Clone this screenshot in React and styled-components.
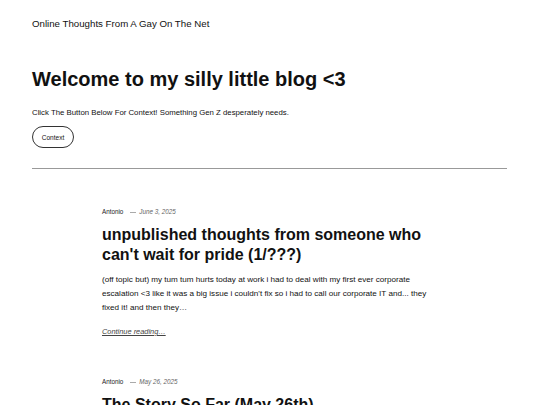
import React from 'react'
import styled, { createGlobalStyle } from 'styled-components'

const GlobalStyle = createGlobalStyle`
  html, body {
    margin: 0;
    padding: 0;
    background: #fff;
    color: #111;
    font-family: "Liberation Sans", Arial, sans-serif;
  }
`

const Page = styled.div`
  width: 540px;
  height: 405px;
  overflow: hidden;
  padding: 0 32px;
  box-sizing: border-box;
`

const Header = styled.header`
  padding-top: 18px;
  height: 50px;
  box-sizing: border-box;
`

const SiteTitle = styled.div`
  font-size: 9.7px;
  line-height: 12px;
  color: #111;
`

const Hero = styled.section`
  padding-top: 17px;
`

const Heading = styled.h1`
  margin: 0;
  font-size: 20px;
  line-height: 24px;
  font-weight: 700;
  color: #111;
`

const Lead = styled.p`
  margin: 17px 0 0;
  font-size: 7.8px;
  line-height: 10px;
  color: #111;
`

const PillButton = styled.button`
  display: block;
  margin-top: 8px;
  width: 42px;
  height: 22px;
  border: 1px solid #333;
  border-radius: 11px;
  background: #fff;
  font-family: inherit;
  font-size: 6.5px;
  color: #111;
  padding: 0;
`

const Rule = styled.hr`
  margin: 20px 0 0;
  border: 0;
  border-top: 1px solid #999;
  width: 475px;
`

const Posts = styled.main`
  padding: 39px 0 0 70px;
  width: 406px;
  box-sizing: border-box;
`

const Post = styled.article`
  margin-bottom: 41px;
`

const Meta = styled.div`
  display: flex;
  align-items: center;
  gap: 7px;
  font-size: 6.3px;
  line-height: 8px;
`

const Author = styled.span`
  color: #222;
`

const PostDate = styled.span`
  color: #666;
  font-style: italic;
  &::before {
    content: '';
    display: inline-block;
    width: 6px;
    height: 0.5px;
    background: #aaa;
    vertical-align: middle;
    margin-right: 3px;
  }
`

const PostTitle = styled.h2`
  margin: 9px 0 0;
  font-size: 16px;
  line-height: 20px;
  font-weight: 700;
  color: #111;
`

const Excerpt = styled.p`
  margin: 8px 0 0;
  font-size: 8.1px;
  line-height: 14px;
  color: #111;
`

const MoreRow = styled.div`
  margin-top: 12px;
  font-size: 7.4px;
  line-height: 10px;
`

const More = styled.a`
  font-style: italic;
  color: #444;
  text-decoration: underline;
`

const posts = [
  {
    author: 'Antonio',
    date: 'June 3, 2025',
    title: "unpublished thoughts from someone who can't wait for pride (1/???)",
    excerpt:
      "(off topic but) my tum tum hurts today at work i had to deal with my first ever corporate escalation <3 like it was a big issue i couldn't fix so i had to call our corporate IT and... they fixed it! and then they…",
  },
  {
    author: 'Antonio',
    date: 'May 26, 2025',
    title: 'The Story So Far (May 26th)',
    excerpt: '',
  },
]

export default function App() {
  return (
    <Page>
      <GlobalStyle />
      <Header>
        <SiteTitle>Online Thoughts From A Gay On The Net</SiteTitle>
      </Header>
      <Hero>
        <Heading>Welcome to my silly little blog &lt;3</Heading>
        <Lead>Click The Button Below For Context! Something Gen Z desperately needs.</Lead>
        <PillButton>Context</PillButton>
      </Hero>
      <Rule />
      <Posts>
        {posts.map((p) => (
          <Post key={p.title}>
            <Meta>
              <Author>{p.author}</Author>
              <PostDate>{p.date}</PostDate>
            </Meta>
            <PostTitle>{p.title}</PostTitle>
            {p.excerpt && (
              <>
                <Excerpt>{p.excerpt}</Excerpt>
                <MoreRow>
                  <More href="#">Continue reading…</More>
                </MoreRow>
              </>
            )}
          </Post>
        ))}
      </Posts>
    </Page>
  )
}
